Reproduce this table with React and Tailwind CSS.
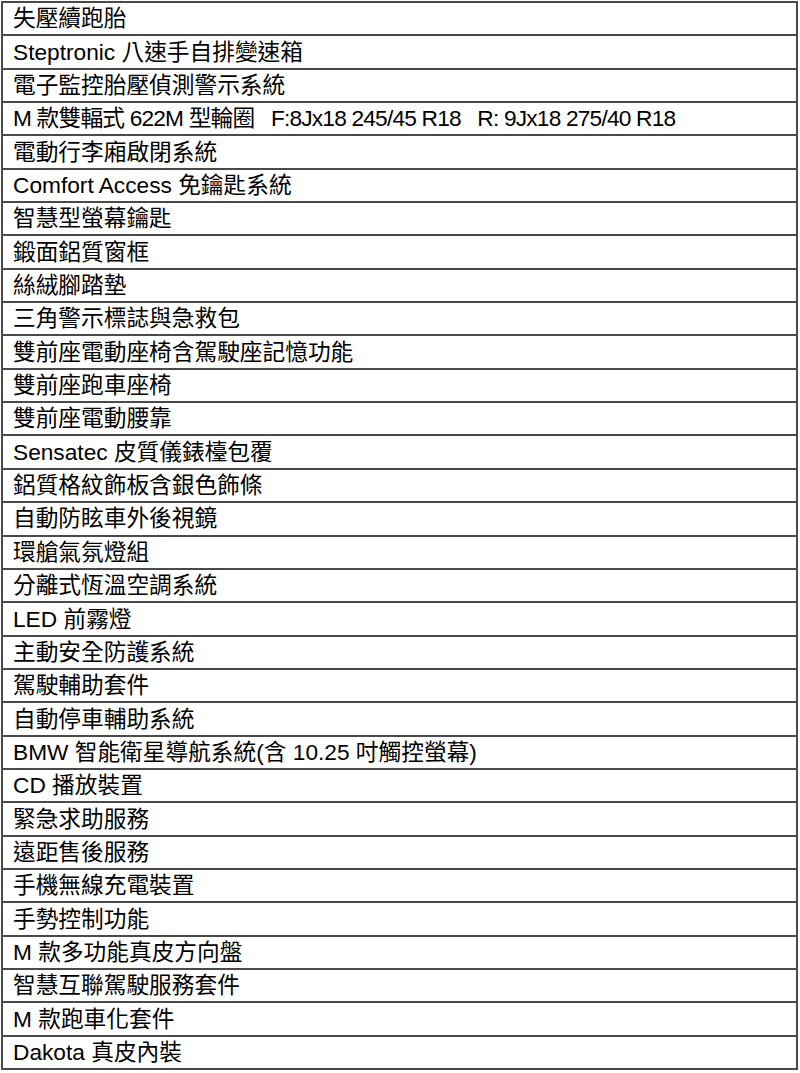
import React from "react";

const ITEMS = [
  "失壓續跑胎",
  "Steptronic 八速手自排變速箱",
  "電子監控胎壓偵測警示系統",
  "M 款雙輻式 622M 型輪圈   F:8Jx18 245/45 R18   R: 9Jx18 275/40 R18",
  "電動行李廂啟閉系統",
  "Comfort Access 免鑰匙系統",
  "智慧型螢幕鑰匙",
  "鍛面鋁質窗框",
  "絲絨腳踏墊",
  "三角警示標誌與急救包",
  "雙前座電動座椅含駕駛座記憶功能",
  "雙前座跑車座椅",
  "雙前座電動腰靠",
  "Sensatec 皮質儀錶檯包覆",
  "鋁質格紋飾板含銀色飾條",
  "自動防眩車外後視鏡",
  "環艙氣氛燈組",
  "分離式恆溫空調系統",
  "LED 前霧燈",
  "主動安全防護系統",
  "駕駛輔助套件",
  "自動停車輔助系統",
  "BMW 智能衛星導航系統(含 10.25 吋觸控螢幕)",
  "CD 播放裝置",
  "緊急求助服務",
  "遠距售後服務",
  "手機無線充電裝置",
  "手勢控制功能",
  "M 款多功能真皮方向盤",
  "智慧互聯駕駛服務套件",
  "M 款跑車化套件",
  "Dakota 真皮內裝",
];

export default function App() {
  return (
    <div className="w-[800px] h-[1073px] bg-white pl-[1px] pt-[1px]">
      <div
        className="w-[797px] h-[1069px] flex flex-col border-2 border-[#4a4a4a] text-black text-[22.7px] leading-none"
        style={{ fontFamily: '"Liberation Sans", "Noto Sans CJK TC", sans-serif' }}
      >
        {ITEMS.map((item, i) => (
          <div
            key={i}
            className={`flex-1 flex items-center pl-[10px] whitespace-pre ${i > 0 ? "border-t-2 border-[#4a4a4a]" : ""} ${i === 3 ? "tracking-[-0.8px]" : ""}`}
          >
            {item}
          </div>
        ))}
      </div>
    </div>
  );
}
